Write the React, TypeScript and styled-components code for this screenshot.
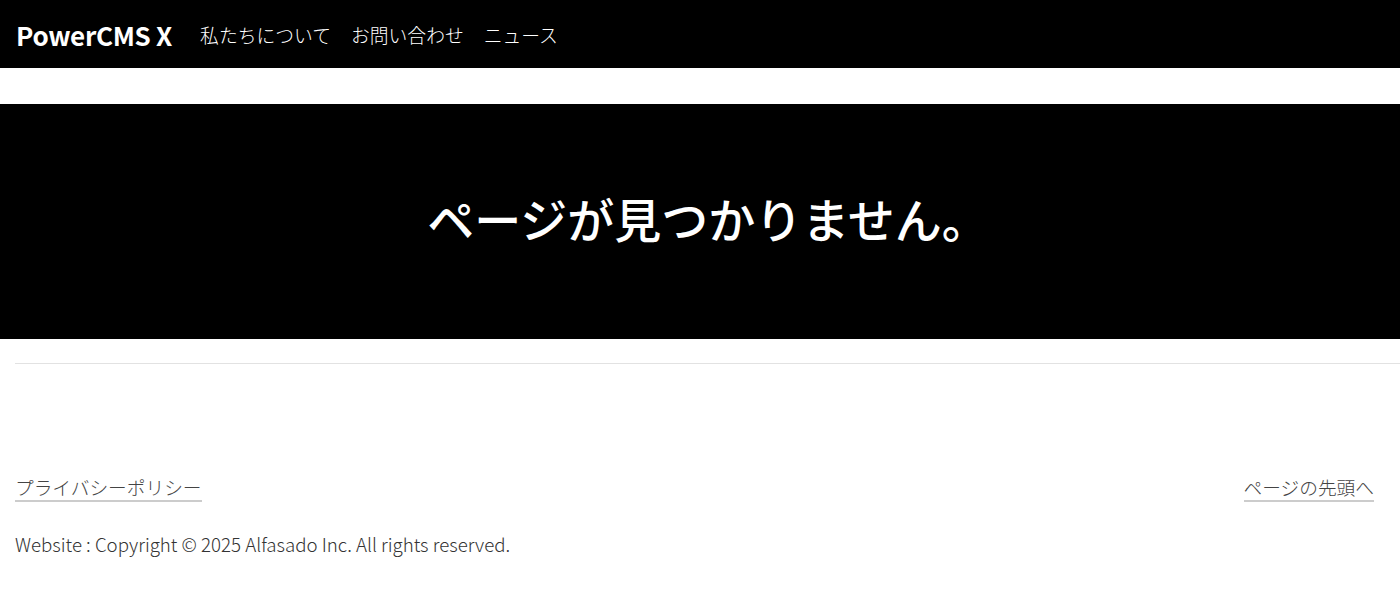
import React from 'react';
import styled, { createGlobalStyle } from 'styled-components';

const GlobalStyle = createGlobalStyle`
  html, body {
    margin: 0;
    padding: 0;
    background: #fff;
    font-family: "Noto Sans CJK JP", "Noto Sans", sans-serif;
  }
`;

const Header = styled.header`
  height: 68px;
  background: #000;
  display: flex;
  align-items: center;
  padding: 0 16px;
  gap: 28px;
`;

const Logo = styled.a`
  color: #fff;
  font-size: 26px;
  font-weight: 700;
  letter-spacing: -0.3px;
  text-decoration: none;
`;

const Nav = styled.nav`
  display: flex;
  gap: 20px;
`;

const NavLink = styled.a`
  color: #fff;
  font-size: 18.8px;
  font-weight: 300;
  text-decoration: none;
`;

const Hero = styled.section`
  margin-top: 36px;
  height: 235px;
  background: #000;
  display: flex;
  align-items: center;
  justify-content: center;
  padding: 0 0 8px 16px;
  box-sizing: border-box;
`;

const Title = styled.h1`
  margin: 0;
  color: #fff;
  font-size: 47px;
  font-weight: 500;
`;

const Divider = styled.hr`
  margin: 24px 0 0 15px;
  border: none;
  border-top: 1px solid #e2e2e2;
`;

const Footer = styled.footer`
  padding: 110px 26px 0 15px;
`;

const FooterLinks = styled.div`
  display: flex;
  justify-content: space-between;
  align-items: flex-end;
`;

const FooterLink = styled.a`
  color: #444;
  font-size: 18.7px;
  font-weight: 300;
  line-height: 26px;
  text-decoration: none;
  border-bottom: 2px solid #ccc;
`;

const Copyright = styled.p`
  margin: 28px 0 0;
  color: #333;
  font-size: 18.7px;
  font-weight: 300;
`;

export default function App() {
  const links = ['私たちについて', 'お問い合わせ', 'ニュース'];
  return (
    <>
      <GlobalStyle />
      <Header>
        <Logo href="#">PowerCMS X</Logo>
        <Nav>
          {links.map(l => (
            <NavLink key={l} href="#">{l}</NavLink>
          ))}
        </Nav>
      </Header>
      <Hero>
        <Title>ページが見つかりません。</Title>
      </Hero>
      <Divider />
      <Footer>
        <FooterLinks>
          <FooterLink href="#">プライバシーポリシー</FooterLink>
          <FooterLink href="#">ページの先頭へ</FooterLink>
        </FooterLinks>
        <Copyright>Website : Copyright © 2025 Alfasado Inc. All rights reserved.</Copyright>
      </Footer>
    </>
  );
}
